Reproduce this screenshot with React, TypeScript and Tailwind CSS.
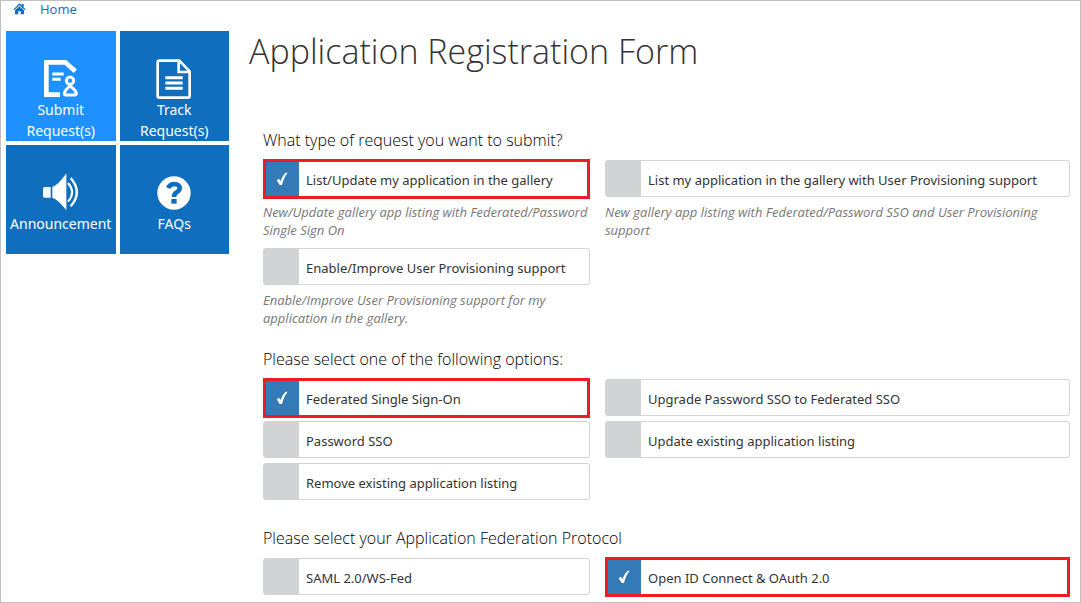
import type { ReactNode } from "react";

type Option = {
  id: string;
  label: string;
  help?: string;
  checked?: boolean;
};

type Section = {
  title: string;
  options: Option[];
};

const sections: Section[] = [
  {
    title: "What type of request you want to submit?",
    options: [
      {
        id: "list-gallery",
        label: "List/Update my application in the gallery",
        help: "New/Update gallery app listing with Federated/Password Single Sign On",
        checked: true,
      },
      {
        id: "list-provisioning",
        label: "List my application in the gallery with User Provisioning support",
        help: "New gallery app listing with Federated/Password SSO and User Provisioning support",
      },
      {
        id: "enable-provisioning",
        label: "Enable/Improve User Provisioning support",
        help: "Enable/Improve User Provisioning support for my application in the gallery.",
      },
    ],
  },
  {
    title: "Please select one of the following options:",
    options: [
      { id: "federated", label: "Federated Single Sign-On", checked: true },
      { id: "upgrade", label: "Upgrade Password SSO to Federated SSO" },
      { id: "password", label: "Password SSO" },
      { id: "update", label: "Update existing application listing" },
      { id: "remove", label: "Remove existing application listing" },
    ],
  },
  {
    title: "Please select your Application Federation Protocol",
    options: [
      { id: "saml", label: "SAML 2.0/WS-Fed" },
      { id: "openid", label: "Open ID Connect & OAuth 2.0", checked: true },
    ],
  },
];

function HomeIcon() {
  return (
    <svg viewBox="0 0 39 36" className="h-3 w-[13px]" fill="currentColor" aria-hidden="true">
      <path d="M19.500 1 L26 7.500 V3 H32 V13.500 L38 19.500 L36 22 L19.500 6.500 L3 22 L1 19.500 Z" />
      <path d="M19.500 9.500 L33 22 V34 H23 V24 H16 V34 H6 V22 Z" />
    </svg>
  );
}

function SubmitIcon() {
  return (
    <svg viewBox="0 0 108 120" className="h-10 w-9 shrink-0" fill="none" stroke="currentColor" aria-hidden="true">
      <path d="M51 107 H10 V10 H67 L97 37" strokeWidth="14" />
      <path d="M28 45 H62 M28 61 H53" strokeWidth="9" />
      <circle cx="81" cy="65" r="11" strokeWidth="9" />
      <path d="M81 80 C76 88 65 90 64 103 Q64 108 69 108 H95 Q100 108 100 103 C98 90 87 88 81 80 Z" strokeWidth="9" />
    </svg>
  );
}

function TrackIcon() {
  return (
    <svg viewBox="0 0 108 120" className="h-10 w-9 shrink-0" fill="none" stroke="currentColor" aria-hidden="true">
      <path d="M10 5 H70 L101 37 V111 Q101 116 96 116 H10 Q5 116 5 111 V10 Q5 5 10 5 Z" strokeWidth="8" strokeLinejoin="round" />
      <path d="M68 6 V39 H100" strokeWidth="8" />
      <path d="M28 56 H80 M28 72 H80 M28 88 H80" strokeWidth="9" />
    </svg>
  );
}

function AnnouncementIcon() {
  return (
    <svg viewBox="0 0 108 120" className="h-10 w-9 shrink-0" fill="currentColor" aria-hidden="true">
      <path d="M5 42 H23 V74 H5 Q0 74 0 69 V47 Q0 42 5 42 Z" />
      <path d="M28 42 Q46 36 70 1 V112 Q46 80 28 74 Z" />
      <path d="M75 30 Q100 58 75 86" fill="none" stroke="currentColor" strokeWidth="6" />
      <path d="M83 15 Q120 58 83 100" fill="none" stroke="currentColor" strokeWidth="7" />
    </svg>
  );
}

function FaqIcon() {
  return (
    <svg viewBox="0 0 108 120" className="h-10 w-9 shrink-0" fill="none" stroke="currentColor" aria-hidden="true">
      <circle cx="54" cy="60" r="50" fill="currentColor" stroke="none" />
      <path d="M36 45 Q42 33 55 33 Q71 34 71 46 Q71 53 62 58 Q54 62 54 72" stroke="#106ebe" strokeWidth="14" />
      <path d="M46 78 H62 V92 H46 Z" fill="#106ebe" stroke="none" />
    </svg>
  );
}

function Tile({ icon, label, active }: { icon: ReactNode; label: string; active?: boolean }) {
  return (
    <a
      href="#"
      className={
        "flex aspect-square min-h-0 min-w-0 flex-col items-center px-[3px] pt-7 text-center font-['Noto_Sans',sans-serif] text-[14px] leading-[21px] text-white " +
        (active ? "bg-[#1e90ff]" : "bg-[#106ebe]")
      }
    >
      {icon}
      <span>{label}</span>
    </a>
  );
}

function OptionBox({ option }: { option: Option }) {
  return (
    <div>
      <label
        htmlFor={option.id}
        className="relative flex h-[37px] items-center rounded-[3px] border border-[#d1d3d4] bg-[#d1d3d4]"
      >
        <span className="grid h-full w-[35px] shrink-0 place-items-center">
          <input
            id={option.id}
            type="checkbox"
            defaultChecked={option.checked}
            className="peer col-start-1 row-start-1 size-full appearance-none checked:bg-[#337ab7]"
          />
          <svg
            viewBox="0 0 36 42"
            className="invisible col-start-1 row-start-1 h-3.5 w-3 text-white peer-checked:visible"
            fill="currentColor"
            aria-hidden="true"
          >
            <path d="M2 25 L9 20 L14 27 C18 14 23 7 29 2 L35 2 C27 13 21 25 18 39 L11 39 Z" />
          </svg>
        </span>
        <span className="flex h-full flex-1 items-center rounded-r-[2px] bg-white pt-1 pl-[7px] font-['Noto_Sans',sans-serif] text-[13px] text-[#333]">
          {option.label}
        </span>
        {option.checked && (
          <span className="pointer-events-none absolute -inset-x-px -top-0.5 -bottom-[3px] border-3 border-[#ed1c24]" />
        )}
      </label>
      {option.help && (
        <p className="mt-1.5 pb-1 text-[13px] leading-[18px] text-[#777] italic">{option.help}</p>
      )}
    </div>
  );
}

export default function App() {
  return (
    <div className="min-h-screen border border-[#bfbfbf] bg-white px-[5px] pb-[7px] font-['Open_Sans','Noto_Sans',sans-serif]">
      <nav className="flex h-[30px] items-start pl-[7px] text-[13px] leading-4 text-[#106ebe]">
        <a href="#" className="flex items-center gap-3.5">
          <HomeIcon />
          Home
        </a>
      </nav>
      <div className="flex items-start">
        <aside className="grid w-[223px] shrink-0 grid-cols-2 gap-1">
          <Tile icon={<SubmitIcon />} label="Submit Request(s)" active />
          <Tile icon={<TrackIcon />} label="Track Request(s)" />
          <Tile icon={<AnnouncementIcon />} label="Announcement" />
          <Tile icon={<FaqIcon />} label="FAQs" />
        </aside>
        <main className="min-w-0 flex-1 pl-5">
          <h1 className="text-[34px] leading-10 font-light text-[#333]">Application Registration Form</h1>
          <form className="mt-[59px] flex flex-col gap-[18px] pr-[5px] pl-3.5">
            {sections.map((section) => (
              <fieldset key={section.title} className="not-first:not-last:pb-2.5">
                <legend className="pb-2.5 text-[16px] leading-5 font-light text-black">{section.title}</legend>
                <div className="grid grid-cols-[327fr_465fr] gap-x-[15px] gap-y-[5px]">
                  {section.options.map((option) => (
                    <OptionBox key={option.id} option={option} />
                  ))}
                </div>
              </fieldset>
            ))}
          </form>
        </main>
      </div>
    </div>
  );
}
